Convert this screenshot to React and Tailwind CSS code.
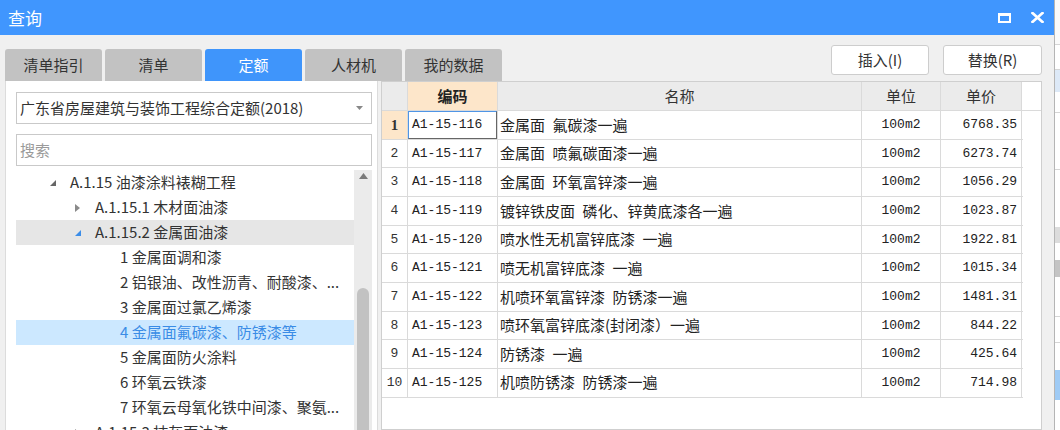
import React from "react";

const tabs = ["清单指引", "清单", "定额", "人材机", "我的数据"];

const tree = [
  { level: 0, text: "A.1.15 油漆涂料裱糊工程", arrow: "open" },
  { level: 1, text: "A.1.15.1 木材面油漆", arrow: "closed" },
  { level: 1, text: "A.1.15.2 金属面油漆", arrow: "openBlue", shaded: true },
  { level: 2, text: "1 金属面调和漆" },
  { level: 2, text: "2 铝银油、改性沥青、耐酸漆、..." },
  { level: 2, text: "3 金属面过氯乙烯漆" },
  { level: 2, text: "4 金属面氟碳漆、防锈漆等", selected: true },
  { level: 2, text: "5 金属面防火涂料" },
  { level: 2, text: "6 环氧云铁漆" },
  { level: 2, text: "7 环氧云母氧化铁中间漆、聚氨..." },
  { level: 1, text: "A.1.15.3 抹灰面油漆", arrow: "closed" },
];

// en spaces keep the wide gap the grid font shows
const rows = [
  ["A1-15-116", "金属面\u2002氟碳漆一遍", "6768.35"],
  ["A1-15-117", "金属面\u2002喷氟碳面漆一遍", "6273.74"],
  ["A1-15-118", "金属面\u2002环氧富锌漆一遍", "1056.29"],
  ["A1-15-119", "镀锌铁皮面\u2002磷化、锌黄底漆各一遍", "1023.87"],
  ["A1-15-120", "喷水性无机富锌底漆\u2002一遍", "1922.81"],
  ["A1-15-121", "喷无机富锌底漆\u2002一遍", "1015.34"],
  ["A1-15-122", "机喷环氧富锌漆\u2002防锈漆一遍", "1481.31"],
  ["A1-15-123", "喷环氧富锌底漆(封闭漆）一遍", "844.22"],
  ["A1-15-124", "防锈漆\u2002一遍", "425.64"],
  ["A1-15-125", "机喷防锈漆\u2002防锈漆一遍", "714.98"],
];

const cjk = { fontFamily: '"Noto Sans CJK SC", "Noto Sans", sans-serif' };
const mono = { fontFamily: '"Liberation Mono", "Noto Sans CJK SC", monospace' };

function Arrow({ type }) {
  if (type === "closed") {
    return (
      <svg width="8" height="10" viewBox="0 0 8 10">
        <path d="M1 1 L6 5 L1 9 Z" fill="#8a8a8a" />
      </svg>
    );
  }
  const color = type === "openBlue" ? "#3c8de8" : "#666";
  return (
    <svg width="8" height="8" viewBox="0 0 8 8">
      <path d="M7 1 L7 7 L1 7 Z" fill={color} />
    </svg>
  );
}

function TreeRow({ item }) {
  const pad = { 0: "pl-[33px]", 1: "pl-[58px]", 2: "pl-[104px]" }[item.level];
  let bg = "";
  if (item.shaded) bg = "bg-[#e6e6e6]";
  if (item.selected) bg = "bg-[#cce8ff]";
  return (
    <div className={`flex h-[25px] shrink-0 items-center ${pad} ${bg}`}>
      {item.arrow && (
        <span className="flex w-[21px] items-center">
          <Arrow type={item.arrow} />
        </span>
      )}
      <span
        className={`whitespace-nowrap text-[15px] ${item.selected ? "text-[#3a8ce6]" : "text-[#333]"}`}
      >
        {item.text}
      </span>
    </div>
  );
}

function TableRow({ row, i }) {
  const first = i === 0;
  return (
    <div className="flex h-[28.67px] shrink-0 border-b border-[#dadada]">
      <div
        className={`flex w-[26px] items-center justify-center border-r border-[#dadada] text-[13px] text-[#333] ${first ? "bg-[#fde6ca] font-bold" : ""}`}
        style={first ? { fontFamily: '"Liberation Serif", serif', fontSize: 15 } : mono}
      >
        {i + 1}
      </div>
      <div className="w-[90px] border-r border-[#dadada]">
        <div
          className={`flex h-full items-center pl-[3px] text-[13px] text-[#222] ${first ? "border border-t-[#4f95e6] border-l-[#4f95e6] border-r-[#666] border-b-[#666]" : "border border-transparent"}`}
          style={mono}
        >
          {row[0]}
        </div>
      </div>
      <div className="flex w-[364px] items-center border-r border-[#dadada] pl-[2px] text-[15px] text-[#222]">
        <span className="whitespace-nowrap">{row[1]}</span>
      </div>
      <div
        className="flex w-[79px] items-center justify-center border-r border-[#dadada] text-[13px] text-[#222]"
        style={mono}
      >
        100m2
      </div>
      <div
        className="flex w-[81px] items-center justify-end border-r border-[#dadada] pr-[4px] text-[13px] text-[#222]"
        style={mono}
      >
        {row[2]}
      </div>
    </div>
  );
}

export default function App() {
  return (
    <div className="flex h-[430px] w-[1060px] overflow-hidden bg-white" style={cjk}>
      <div className="flex w-[1054px] shrink-0 flex-col bg-[#f0f0f0]">
        {/* title bar */}
        <div className="flex h-[35px] shrink-0 items-center justify-between bg-[#4096fe] pl-[8px] pr-[10px]">
          <span className="text-[17px] text-white">查询</span>
          <div className="flex items-center gap-[20px]">
            <svg width="13" height="10" viewBox="0 0 13 10">
              <rect x="1" y="1.5" width="11" height="7.5" fill="none" stroke="#fff" strokeWidth="2" />
              <rect x="0" y="0" width="13" height="3" fill="#fff" />
            </svg>
            <svg width="13" height="11" viewBox="0 0 13 11">
              <path d="M1.5 1 L11.5 10 M11.5 1 L1.5 10" stroke="#fff" strokeWidth="2.6" strokeLinecap="square" />
            </svg>
          </div>
        </div>

        {/* tabs + buttons */}
        <div className="flex h-[46px] shrink-0 items-end justify-between pl-[5px] pr-[12px]">
          <div className="flex gap-[3px]">
            {tabs.map((t) => (
              <div
                key={t}
                className={`flex h-[32px] w-[97px] items-center justify-center rounded-t-[3px] text-[15px] ${t === "定额" ? "bg-[#3f95fb] text-white" : "bg-[#c2c2c2] text-[#333]"}`}
              >
                {t}
              </div>
            ))}
          </div>
          <div className="mb-[6px] flex gap-[14px]">
            <button className="flex h-[30px] w-[98px] items-center justify-center rounded-[3px] border border-[#cdcdcd] bg-white text-[15px] text-[#333]">
              插入(I)
            </button>
            <button className="flex h-[30px] w-[99px] items-center justify-center rounded-[3px] border border-[#cdcdcd] bg-white text-[15px] text-[#333]">
              替换(R)
            </button>
          </div>
        </div>

        {/* main area */}
        <div className="flex min-h-0 flex-1 gap-[3px] pl-[5px] pr-[12px]">
          {/* left panel */}
          <div className="flex w-[373px] shrink-0 flex-col border-x border-[#dcdcdc] bg-white pl-[10px] pr-[5px]">
            <div className="mt-[11px] flex h-[32px] shrink-0 items-center justify-between border border-[#c9c9c9] pl-[3px] pr-[8px]">
              <span className="whitespace-nowrap text-[15px] text-[#333]">
                广东省房屋建筑与装饰工程综合定额(2018)
              </span>
              <svg width="7" height="4" viewBox="0 0 7 4">
                <path d="M0 0 L7 0 L3.5 4 Z" fill="#888" />
              </svg>
            </div>
            <div className="mt-[10px] flex h-[32px] shrink-0 items-center border border-[#c9c9c9] pl-[3px]">
              <span className="text-[15px] text-[#9a9a9a]">搜索</span>
            </div>
            <div className="mt-[4px] flex min-h-0 flex-1">
              <div className="flex min-w-0 flex-1 flex-col overflow-hidden">
                {tree.map((item, i) => (
                  <TreeRow key={i} item={item} />
                ))}
              </div>
              <div className="flex w-[18px] shrink-0 flex-col items-center bg-[#ebebeb]">
                <svg className="mt-[3px]" width="9" height="6" viewBox="0 0 9 6">
                  <path d="M0 6 L4.5 0 L9 6 Z" fill="#7a7a7a" />
                </svg>
                <div className="mt-[109px] w-[12px] flex-1 rounded-t-full bg-[#c2c2c2]" />
              </div>
            </div>
          </div>

          {/* table */}
          <div className="flex min-w-0 flex-1 flex-col border border-[#cfcfcf] bg-white">
            <div className="flex h-[29px] shrink-0 border-b border-[#dadada] text-[15px]">
              <div className="w-[26px] border-r border-[#dadada] bg-[#ebebeb]" />
              <div className="flex w-[90px] items-center justify-center border-r border-[#dadada] bg-[#fde6ca] font-bold text-[#222]">
                编码
              </div>
              <div className="flex w-[364px] items-center justify-center border-r border-[#dadada] bg-[#ebebeb] text-[#333]">
                名称
              </div>
              <div className="flex w-[79px] items-center justify-center border-r border-[#dadada] bg-[#ebebeb] text-[#333]">
                单位
              </div>
              <div className="flex w-[81px] items-center justify-center border-r border-[#dadada] bg-[#ebebeb] text-[#333]">
                单价
              </div>
            </div>
            <div className="flex w-[641px] flex-col">
              {rows.map((r, i) => (
                <TableRow key={i} row={r} i={i} />
              ))}
            </div>
          </div>
        </div>
      </div>

      {/* edge of the window behind */}
      <div className="flex flex-1 flex-col border-l border-[#b5b5b5] bg-[#fafafa]">
        <div className="h-[45px] border-b border-[#d5d5d5]" />
        <div className="h-[25px] border-b border-[#d5d5d5] bg-white" />
        <div className="h-[22px] bg-[#dde9f7]" />
        <div className="h-[21px] border-b border-[#d5d5d5] bg-white" />
        <div className="h-[57px] border-b border-[#d5d5d5] bg-white" />
        <div className="h-[57px] bg-white" />
        <div className="h-[16px] bg-[#dcdcdc]" />
        <div className="h-[17px] bg-white" />
        <div className="h-[17px] bg-[#c4c4c4]" />
        <div className="h-[40px] border-b border-[#d5d5d5] bg-white" />
        <div className="h-[26px] border-b border-[#d5d5d5] bg-white" />
        <div className="h-[27px] bg-white" />
        <div className="h-[30px] bg-[#9fcbf5]" />
        <div className="flex-1 bg-white" />
      </div>
    </div>
  );
}
